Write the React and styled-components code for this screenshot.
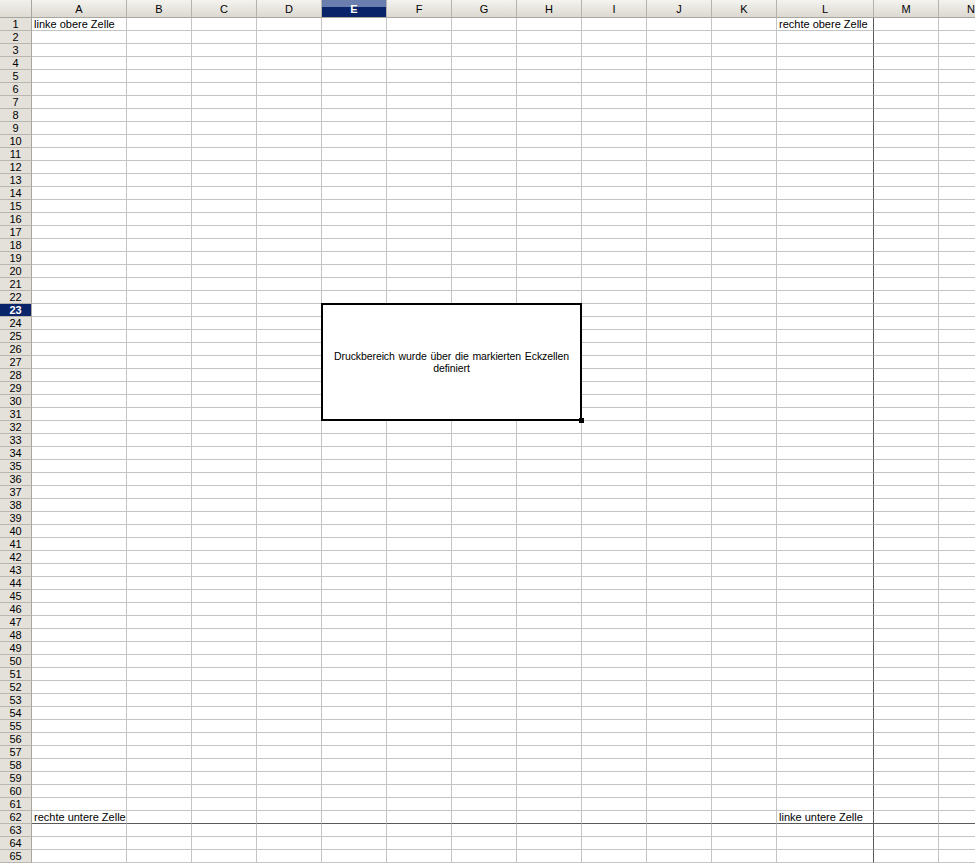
import React from "react";
import styled, { createGlobalStyle } from "styled-components";

const Global = createGlobalStyle`
  html, body { margin: 0; padding: 0; background: #fff; overflow: hidden; }
  body { font-family: "Liberation Sans", Arial, sans-serif; }
`;

const COLS = ["A","B","C","D","E","F","G","H","I","J","K","L","M","N"];
const WIDTHS = [95,65,65,65,65,65,65,65,65,65,65,97,65,65];
const ROWS = 65;

const Wrap = styled.div`
  position: relative;
  width: 975px;
  height: 864px;
  overflow: hidden;
`;

const Sheet = styled.div`
  display: grid;
  grid-template-columns: 32px ${WIDTHS.map(w => w + "px").join(" ")};
  grid-template-rows: 18px repeat(${ROWS}, 13px);
`;

const Corner = styled.div`
  background: linear-gradient(#f2f1ed, #dedbd3);
  border-right: 1px solid #a8a69e;
  border-bottom: 1px solid #a8a69e;
  box-sizing: border-box;
`;

const ColHead = styled.div`
  box-sizing: border-box;
  font-size: 11px;
  display: flex;
  align-items: center;
  justify-content: center;
  color: ${p => (p.$sel ? "#fff" : "#000")};
  font-weight: ${p => (p.$sel ? "bold" : "normal")};
  background: ${p => (p.$sel
    ? "linear-gradient(#6a7fae 0 40%, #0a246a 40% 100%)"
    : "linear-gradient(#f4f3ef, #dcd9d1)")};
  border-right: 1px solid #b4b2aa;
  border-bottom: 1px solid #a8a69e;
`;

const RowHead = styled.div`
  box-sizing: border-box;
  font-size: 11px;
  line-height: 12px;
  text-align: center;
  color: ${p => (p.$sel ? "#fff" : "#000")};
  font-weight: ${p => (p.$sel ? "bold" : "normal")};
  background: ${p => (p.$sel ? "#0a246a" : "#e4e1da")};
  border-right: 1px solid #a8a69e;
  border-bottom: 1px solid #b8b6ae;
`;

const Cell = styled.div`
  box-sizing: border-box;
  font-size: 11px;
  line-height: 12px;
  padding-left: 2px;
  white-space: nowrap;
  overflow: visible;
  position: relative;
  z-index: 1;
  border-right: 1px solid ${p => (p.$breakR ? "#5a5a5a" : "#c4c4c4")};
  border-bottom: 1px solid ${p => (p.$breakB ? "#5a5a5a" : "#c4c4c4")};
`;

const TextBox = styled.div`
  position: absolute;
  left: 321px;
  top: 303px;
  width: 261px;
  height: 118px;
  box-sizing: border-box;
  border: 2px solid #000;
  background: #fff;
  z-index: 5;
  display: flex;
  align-items: center;
  justify-content: center;
  text-align: center;
  font-size: 10.5px;
  line-height: 12px;
  letter-spacing: -0.1px;
  word-spacing: 1px;
  padding: 0 4px;
`;

const Handle = styled.div`
  position: absolute;
  right: -4px;
  bottom: -4px;
  width: 5px;
  height: 5px;
  background: #000;
`;

const texts = {
  "1-0": "linke obere Zelle",
  "1-11": "rechte obere Zelle",
  "62-0": "rechte untere Zelle",
  "62-11": "linke untere Zelle",
};

export default function App() {
  const cells = [<Corner key="c" />];
  COLS.forEach((c, i) => cells.push(<ColHead key={"h" + c} $sel={i === 4}>{c}</ColHead>));
  for (let r = 1; r <= ROWS; r++) {
    cells.push(<RowHead key={"r" + r} $sel={r === 23}>{r}</RowHead>);
    COLS.forEach((c, i) => {
      cells.push(
        <Cell key={r + c} $breakR={i === 11} $breakB={r === 62}>
          {texts[`${r}-${i}`] || ""}
        </Cell>
      );
    });
  }
  return (
    <Wrap>
      <Global />
      <Sheet>{cells}</Sheet>
      <TextBox>
        Druckbereich wurde über die markierten Eckzellen definiert
        <Handle />
      </TextBox>
    </Wrap>
  );
}
